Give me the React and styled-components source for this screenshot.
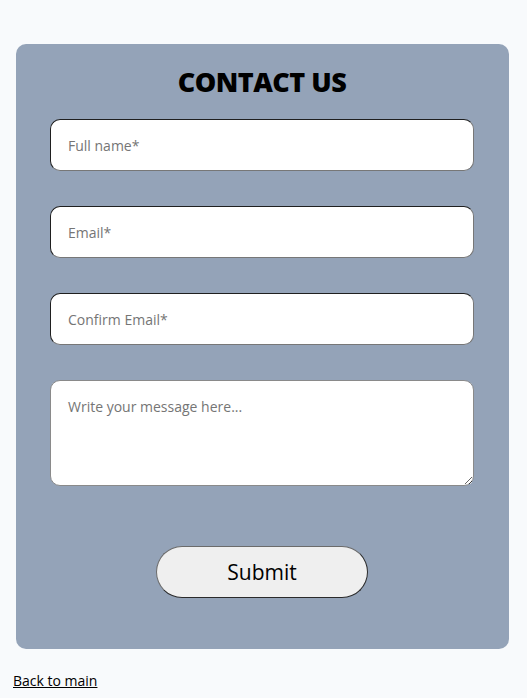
import styled, { createGlobalStyle } from "styled-components";

const GlobalStyle = createGlobalStyle`
  html, body {
    margin: 0;
    padding: 0;
    background: #f8fafc;
    font-family: "Open Sans", "Liberation Sans", sans-serif;
  }
`;

function App() {
  return (
    <Page>
      <GlobalStyle />
      <Card>
        <Title>CONTACT US</Title>
        <Form onSubmit={(e) => e.preventDefault()}>
          <Field type="text" placeholder="Full name*" />
          <Field type="email" placeholder="Email*" />
          <Field type="email" placeholder="Confirm Email*" />
          <Message placeholder="Write your message here..." />
          <SubmitButton type="submit">Submit</SubmitButton>
        </Form>
      </Card>
      <BackLink href="#">Back to main</BackLink>
    </Page>
  );
}

export default App;

const Page = styled.div`
  padding: 44px 18px 0 16px;
  min-height: 698px;
  box-sizing: border-box;
`;

const Card = styled.div`
  background: #94a3b8;
  border-radius: 10px;
  padding: 21px 35px 51px 34px;
`;

const Title = styled.h1`
  margin: 0 0 20px;
  text-align: center;
  font-family: "Open Sans", "Liberation Sans", sans-serif;
  font-weight: 800;
  font-size: 27px;
  letter-spacing: -0.5px;
  line-height: 34px;
  color: #000;
`;

const Form = styled.form`
  display: flex;
  flex-direction: column;
  gap: 35px;
`;

const Field = styled.input`
  box-sizing: border-box;
  height: 52px;
  width: 100%;
  padding: 0 17px;
  border: 1.5px solid;
  border-color: #1f1f1f #777 #777 #1f1f1f;
  border-radius: 10px;
  background: #fff;
  font-family: "Open Sans", "Liberation Sans", sans-serif;
  font-size: 14px;
  outline: none;

  &::placeholder {
    color: #757575;
  }
`;

const Message = styled.textarea`
  box-sizing: border-box;
  height: 106px;
  width: 100%;
  padding: 16px 17px;
  border: 1.5px solid #8a8a8a;
  border-radius: 10px;
  background: #fff;
  font-family: "Open Sans", "Liberation Sans", sans-serif;
  font-size: 14px;
  outline: none;

  &::placeholder {
    color: #757575;
  }
`;

const SubmitButton = styled.button`
  align-self: center;
  margin-top: 25px;
  width: 212px;
  height: 52px;
  border: 1.5px solid;
  border-color: #6b6b6b #2a2a2a #2a2a2a #6b6b6b;
  border-radius: 26px;
  background: #efefef;
  color: #000;
  font-family: "Open Sans", "Liberation Sans", sans-serif;
  font-size: 21px;
  cursor: pointer;
`;

const BackLink = styled.a`
  display: inline-block;
  margin: 22px 0 0 -3px;
  color: #000;
  font-size: 14px;
  text-decoration: underline;
`;
